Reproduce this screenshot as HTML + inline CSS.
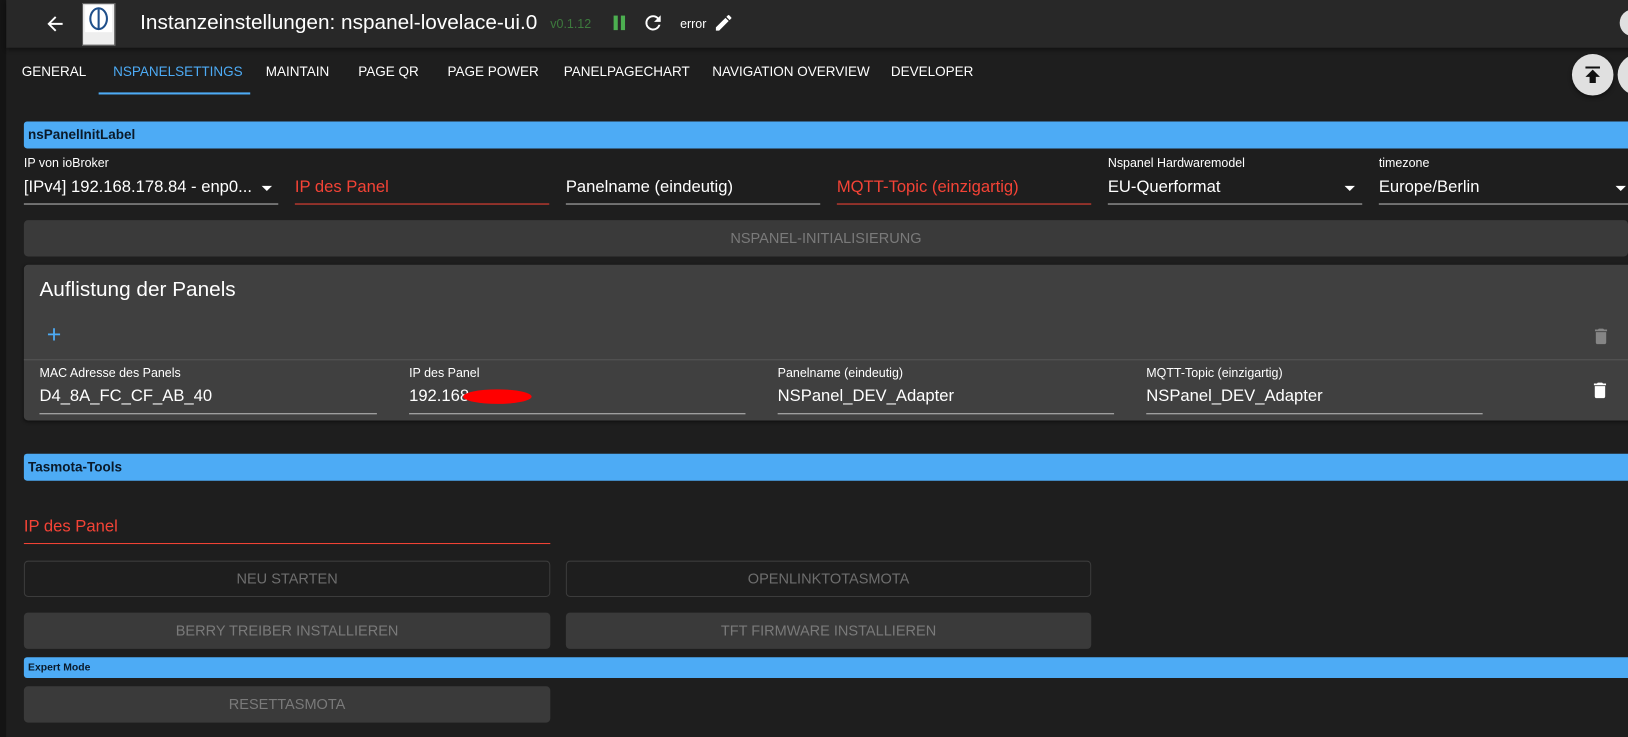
<!DOCTYPE html>
<html><head><meta charset="utf-8"><style>
*{box-sizing:border-box;margin:0;padding:0}
body{width:1628px;height:737px;overflow:hidden;background:#1e1e1e;font-family:"Liberation Sans",sans-serif;color:#fff;position:relative}
#w{position:absolute;left:0;top:0;width:1568px;height:710px;transform:scale(1.03827);transform-origin:0 0;overflow:hidden}
.a{position:absolute}
.strip{left:0;top:0;width:6px;height:737px;background:#141414}
.hdr{left:6px;top:0;width:1622px;height:46px;background:#282828;box-shadow:0 2px 4px rgba(0,0,0,.4)}
.tab{top:61px;font-size:13px;color:#fff;white-space:nowrap}
.bar{background:#4dabf5;color:#0a1a2a;font-weight:bold;font-size:13px;padding-left:4px;border-radius:3px 0 0 3px}
.lbl{font-size:12px;color:#fff}
.val{font-size:16px;color:#fff;white-space:nowrap}
.red{color:#f44336}
.ul{height:1px;background:#bbb}
.ulr{height:1px;background:#f44336}
.btn{background:#3a3a3a;border-radius:4px;color:#7a7a7a;font-size:14px;text-align:center}
.obtn{border:1px solid #3c3c3c;border-radius:4px;color:#6e6e6e;font-size:14px;text-align:center}
.caret{width:0;height:0;border-left:5px solid transparent;border-right:5px solid transparent;border-top:5px solid #fff}
</style></head><body><div id="w">
<div class="a strip"></div>
<div class="a hdr"></div>
<svg class="a" style="left:42px;top:12px" width="22" height="22" viewBox="0 0 24 24"><path d="M20 11H7.83l5.59-5.59L12 4l-8 8 8 8 1.41-1.41L7.83 13H20z" fill="#fff"/></svg>
<div class="a" style="left:79px;top:3px;width:32px;height:41px;background:#eee;border:1px solid #555"></div>
<div class="a" style="left:82px;top:5px;width:26px;height:26px;background:#fff"></div>
<div class="a" style="left:86px;top:7px;width:18px;height:22px;border:2.5px solid #1f4f8a;border-radius:50%"></div>
<div class="a" style="left:94px;top:9px;width:2px;height:18px;background:#1f4f8a"></div>
<div class="a" style="left:135px;top:11px;font-size:20px">Instanzeinstellungen: nspanel-lovelace-ui.0</div>
<div class="a" style="left:530px;top:16px;font-size:12px;color:#3d7a3d">v0.1.12</div>
<div class="a" style="left:591px;top:15px;width:4px;height:14px;background:#4caf50"></div>
<div class="a" style="left:598px;top:15px;width:4px;height:14px;background:#4caf50"></div>
<svg class="a" style="left:618px;top:11px" width="22" height="22" viewBox="0 0 24 24"><path d="M17.65 6.35A7.96 7.96 0 0 0 12 4a8 8 0 1 0 7.73 10h-2.08A6 6 0 1 1 12 6c1.66 0 3.14.69 4.22 1.78L13 11h7V4z" fill="#fff"/></svg>
<div class="a" style="left:655px;top:16px;font-size:12px">error</div>
<svg class="a" style="left:687px;top:12px" width="20" height="20" viewBox="0 0 24 24"><path d="M3 17.25V21h3.75L17.81 9.94l-3.75-3.75zM20.71 7.04a1 1 0 0 0 0-1.41l-2.34-2.34a1 1 0 0 0-1.41 0l-1.83 1.83 3.75 3.75z" fill="#fff"/></svg>
<div class="a" style="left:1560px;top:9px;width:26px;height:26px;border-radius:50%;background:#e0e0e0"></div>

<div class="a tab" style="left:21px">GENERAL</div>
<div class="a tab" style="left:109px;color:#4dabf5">NSPANELSETTINGS</div>
<div class="a" style="left:95px;top:89px;width:146px;height:2px;background:#4dabf5"></div>
<div class="a tab" style="left:256px">MAINTAIN</div>
<div class="a tab" style="left:345px">PAGE QR</div>
<div class="a tab" style="left:431px">PAGE POWER</div>
<div class="a tab" style="left:543px">PANELPAGECHART</div>
<div class="a tab" style="left:686px">NAVIGATION OVERVIEW</div>
<div class="a tab" style="left:858px">DEVELOPER</div>
<div class="a" style="left:1514px;top:52px;width:40px;height:40px;border-radius:50%;background:#e0e0e0;box-shadow:0 2px 4px rgba(0,0,0,.5)"></div>
<svg class="a" style="left:1522px;top:60px" width="24" height="24" viewBox="0 0 24 24"><path d="M5 4v2h14V4zm0 10h4v6h6v-6h4l-7-7z" fill="#111"/></svg>
<div class="a" style="left:1558px;top:52px;width:40px;height:40px;border-radius:50%;background:#e0e0e0"></div>

<div class="a bar" style="left:23px;top:117px;width:1605px;height:26px;line-height:26px">nsPanelInitLabel</div>

<div class="a lbl" style="left:23px;top:150px">IP von ioBroker</div>
<div class="a val" style="left:23px;top:172px">[IPv4] 192.168.178.84 - enp0...</div>
<div class="a caret" style="left:252px;top:179px"></div>
<div class="a ul" style="left:23px;top:196px;width:245px"></div>
<div class="a val red" style="left:284px;top:172px">IP des Panel</div>
<div class="a ulr" style="left:284px;top:196px;width:245px"></div>
<div class="a val" style="left:545px;top:172px">Panelname (eindeutig)</div>
<div class="a ul" style="left:545px;top:196px;width:245px"></div>
<div class="a val red" style="left:806px;top:172px">MQTT-Topic (einzigartig)</div>
<div class="a ulr" style="left:806px;top:196px;width:245px"></div>
<div class="a lbl" style="left:1067px;top:150px">Nspanel Hardwaremodel</div>
<div class="a val" style="left:1067px;top:172px">EU-Querformat</div>
<div class="a caret" style="left:1295px;top:179px"></div>
<div class="a ul" style="left:1067px;top:196px;width:245px"></div>
<div class="a lbl" style="left:1328px;top:150px">timezone</div>
<div class="a val" style="left:1328px;top:172px">Europe/Berlin</div>
<div class="a caret" style="left:1556px;top:179px"></div>
<div class="a ul" style="left:1328px;top:196px;width:240px"></div>

<div class="a btn" style="left:23px;top:212px;width:1545px;height:35px;line-height:35px">NSPANEL-INITIALISIERUNG</div>

<div class="a" style="left:23px;top:255px;width:1605px;height:150px;background:#404040;border-radius:4px 0 0 4px;box-shadow:0 1px 3px rgba(0,0,0,.5)"></div>
<div class="a" style="left:38px;top:268px;font-size:20px">Auflistung der Panels</div>
<div class="a" style="left:45px;top:309px;font-size:24px;color:#4dabf5;font-weight:300">+</div>
<svg class="a" style="left:1532px;top:313px" width="20" height="22" viewBox="0 0 24 24"><path d="M6 19c0 1.1.9 2 2 2h8c1.1 0 2-.9 2-2V7H6zM19 4h-3.5l-1-1h-5l-1 1H5v2h14z" fill="#858585"/></svg>
<div class="a" style="left:23px;top:346px;width:1605px;height:1px;background:#555"></div>
<div class="a lbl" style="left:38px;top:352px">MAC Adresse des Panels</div>
<div class="a val" style="left:38px;top:373px">D4_8A_FC_CF_AB_40</div>
<div class="a ul" style="left:38px;top:398px;width:325px"></div>
<div class="a lbl" style="left:394px;top:352px">IP des Panel</div>
<div class="a val" style="left:394px;top:373px">192.168.</div>
<div class="a" style="left:446px;top:375px;width:66px;height:14px;background:#f00;border-radius:50%"></div>
<div class="a ul" style="left:394px;top:398px;width:324px"></div>
<div class="a lbl" style="left:749px;top:352px">Panelname (eindeutig)</div>
<div class="a val" style="left:749px;top:373px">NSPanel_DEV_Adapter</div>
<div class="a ul" style="left:749px;top:398px;width:324px"></div>
<div class="a lbl" style="left:1104px;top:352px">MQTT-Topic (einzigartig)</div>
<div class="a val" style="left:1104px;top:373px">NSPanel_DEV_Adapter</div>
<div class="a ul" style="left:1104px;top:398px;width:324px"></div>
<svg class="a" style="left:1531px;top:365px" width="20" height="22" viewBox="0 0 24 24"><path d="M6 19c0 1.1.9 2 2 2h8c1.1 0 2-.9 2-2V7H6zM19 4h-3.5l-1-1h-5l-1 1H5v2h14z" fill="#fff"/></svg>

<div class="a bar" style="left:23px;top:437px;width:1605px;height:26px;line-height:26px">Tasmota-Tools</div>
<div class="a val red" style="left:23px;top:499px">IP des Panel</div>
<div class="a ulr" style="left:23px;top:523px;width:507px"></div>
<div class="a obtn" style="left:23px;top:540px;width:507px;height:35px;line-height:33px">NEU STARTEN</div>
<div class="a obtn" style="left:545px;top:540px;width:506px;height:35px;line-height:33px">OPENLINKTOTASMOTA</div>
<div class="a btn" style="left:23px;top:590px;width:507px;height:35px;line-height:35px">BERRY TREIBER INSTALLIEREN</div>
<div class="a btn" style="left:545px;top:590px;width:506px;height:35px;line-height:35px">TFT FIRMWARE INSTALLIEREN</div>
<div class="a bar" style="left:23px;top:633px;width:1605px;height:20px;line-height:21px;font-size:10px">Expert Mode</div>
<div class="a btn" style="left:23px;top:661px;width:507px;height:35px;line-height:35px">RESETTASMOTA</div>
</div></body></html>
